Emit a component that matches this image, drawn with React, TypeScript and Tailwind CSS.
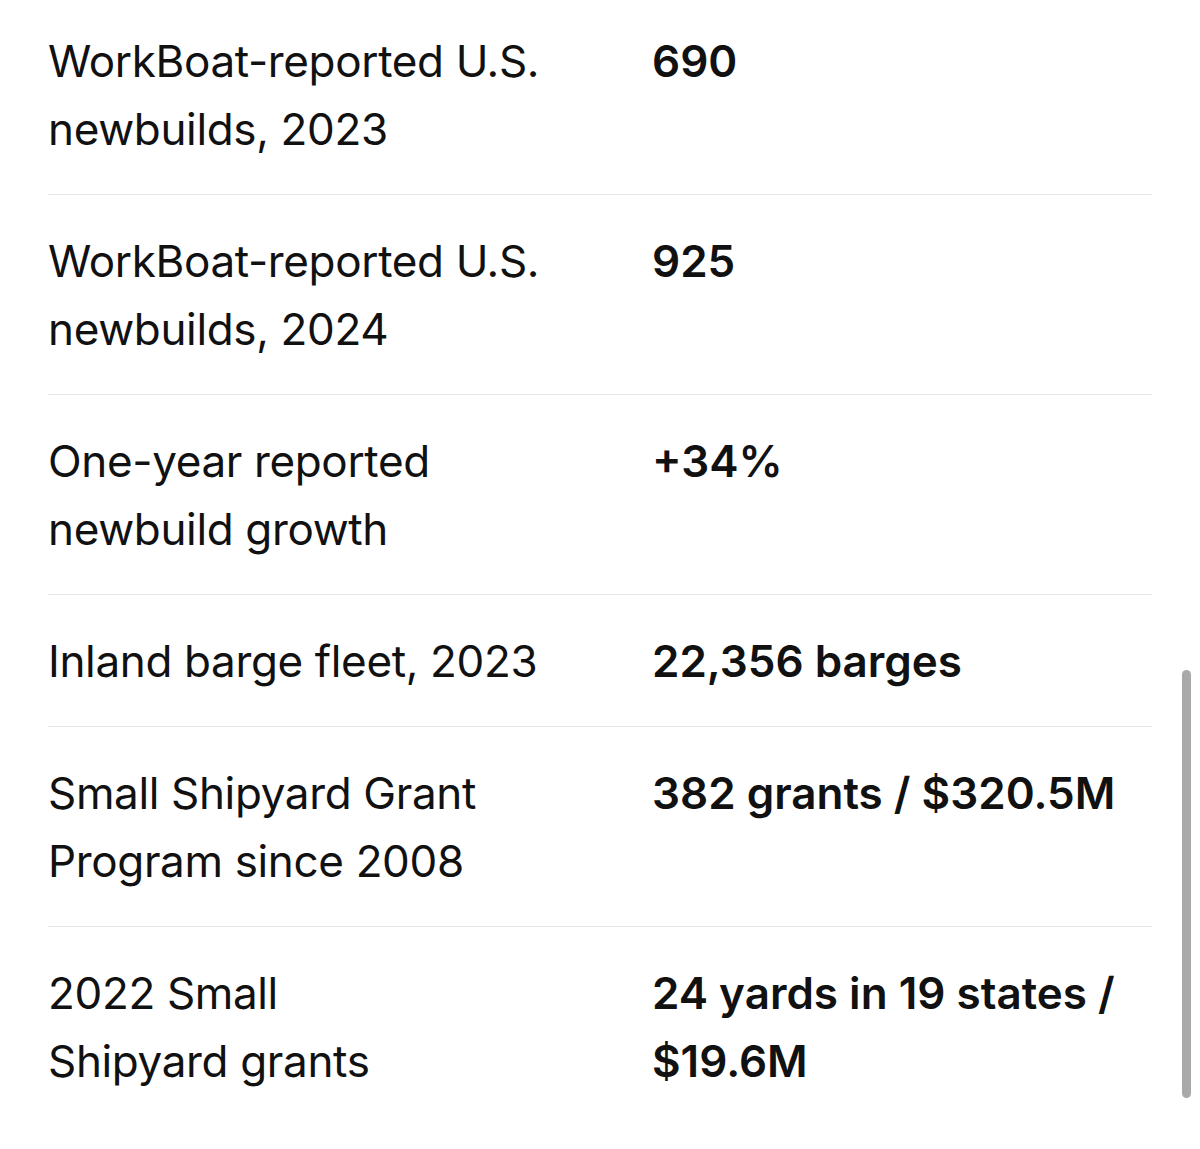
const rows: { label: string[]; value: string[] }[] = [
  { label: ["WorkBoat-reported U.S.", "newbuilds, 2023"], value: ["690"] },
  { label: ["WorkBoat-reported U.S.", "newbuilds, 2024"], value: ["925"] },
  { label: ["One-year reported", "newbuild growth"], value: ["+34%"] },
  { label: ["Inland barge fleet, 2023"], value: ["22,356 barges"] },
  { label: ["Small Shipyard Grant", "Program since 2008"], value: ["382 grants / $320.5M"] },
  { label: ["2022 Small", "Shipyard grants"], value: ["24 yards in 19 states /", "$19.6M"] },
]

export default function App() {
  return (
    <div className="relative h-[1149px] w-[1200px] overflow-hidden bg-white font-['Inter',sans-serif] text-[#111111]">
      <div className="mx-12 -mt-[5px]">
        {rows.map((row, i) => (
          <div
            key={i}
            className={`grid grid-cols-[604px_1fr] pt-8 pb-[31px] text-[44px] leading-[68px] ${
              i < rows.length - 1 ? "border-b border-[#e6e6e6]" : ""
            }`}
          >
            <div className="font-normal tracking-[-0.35px]">
              {row.label.map((l) => (
                <div key={l}>{l}</div>
              ))}
            </div>
            <div className="font-semibold">
              {row.value.map((v) => (
                <div key={v}>{v}</div>
              ))}
            </div>
          </div>
        ))}
      </div>

      {/* scroll indicator */}
      <div className="absolute left-[1182px] top-[670px] h-[428px] w-[9px] rounded-full bg-[#a9a9a9]" />
    </div>
  )
}
